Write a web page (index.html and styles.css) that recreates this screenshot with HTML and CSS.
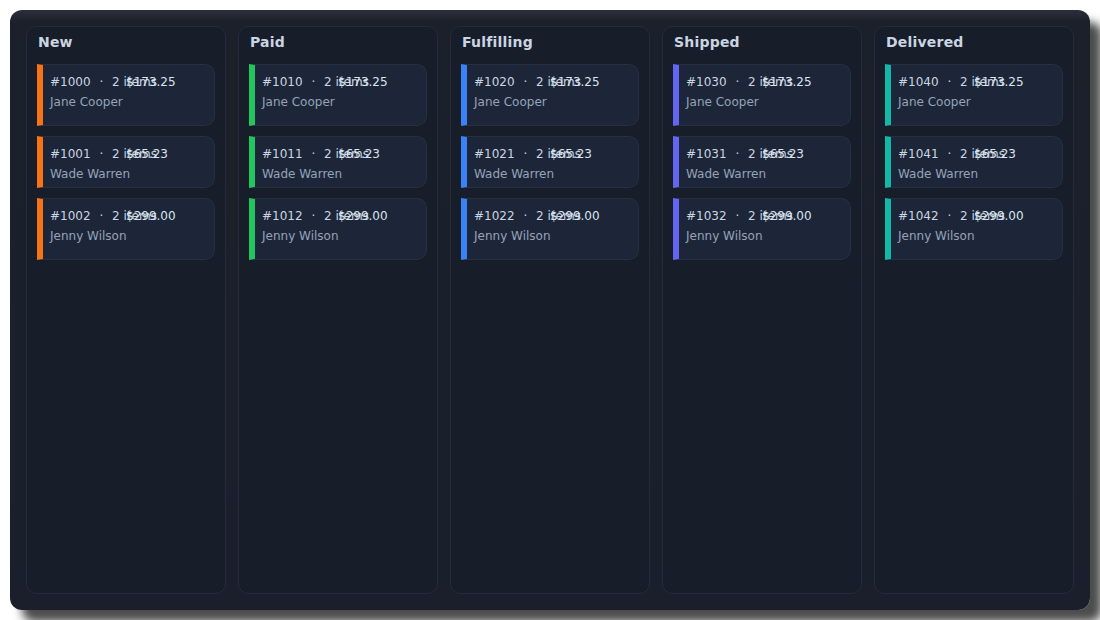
FILE: index.html
```html
<!DOCTYPE html>
<html>
<head>
<meta charset="utf-8">
<link rel="stylesheet" href="styles.css">
</head>
<body>
<div class="board">
  <section class="column">
    <h2 class="col-title">New</h2>
    <div class="card c-orange tall"><div class="top"><span class="meta">#1000 <span class="sep">·</span> 2 items</span><span class="price">$173.25</span></div><div class="name">Jane Cooper</div></div>
    <div class="card c-orange"><div class="top"><span class="meta">#1001 <span class="sep">·</span> 2 items</span><span class="price">$65.23</span></div><div class="name">Wade Warren</div></div>
    <div class="card c-orange tall"><div class="top"><span class="meta">#1002 <span class="sep">·</span> 2 items</span><span class="price">$299.00</span></div><div class="name">Jenny Wilson</div></div>
  </section>
  <section class="column">
    <h2 class="col-title">Paid</h2>
    <div class="card c-green tall"><div class="top"><span class="meta">#1010 <span class="sep">·</span> 2 items</span><span class="price">$173.25</span></div><div class="name">Jane Cooper</div></div>
    <div class="card c-green"><div class="top"><span class="meta">#1011 <span class="sep">·</span> 2 items</span><span class="price">$65.23</span></div><div class="name">Wade Warren</div></div>
    <div class="card c-green tall"><div class="top"><span class="meta">#1012 <span class="sep">·</span> 2 items</span><span class="price">$299.00</span></div><div class="name">Jenny Wilson</div></div>
  </section>
  <section class="column">
    <h2 class="col-title">Fulfilling</h2>
    <div class="card c-blue tall"><div class="top"><span class="meta">#1020 <span class="sep">·</span> 2 items</span><span class="price">$173.25</span></div><div class="name">Jane Cooper</div></div>
    <div class="card c-blue"><div class="top"><span class="meta">#1021 <span class="sep">·</span> 2 items</span><span class="price">$65.23</span></div><div class="name">Wade Warren</div></div>
    <div class="card c-blue tall"><div class="top"><span class="meta">#1022 <span class="sep">·</span> 2 items</span><span class="price">$299.00</span></div><div class="name">Jenny Wilson</div></div>
  </section>
  <section class="column">
    <h2 class="col-title">Shipped</h2>
    <div class="card c-indigo tall"><div class="top"><span class="meta">#1030 <span class="sep">·</span> 2 items</span><span class="price">$173.25</span></div><div class="name">Jane Cooper</div></div>
    <div class="card c-indigo"><div class="top"><span class="meta">#1031 <span class="sep">·</span> 2 items</span><span class="price">$65.23</span></div><div class="name">Wade Warren</div></div>
    <div class="card c-indigo tall"><div class="top"><span class="meta">#1032 <span class="sep">·</span> 2 items</span><span class="price">$299.00</span></div><div class="name">Jenny Wilson</div></div>
  </section>
  <section class="column">
    <h2 class="col-title">Delivered</h2>
    <div class="card c-teal tall"><div class="top"><span class="meta">#1040 <span class="sep">·</span> 2 items</span><span class="price">$173.25</span></div><div class="name">Jane Cooper</div></div>
    <div class="card c-teal"><div class="top"><span class="meta">#1041 <span class="sep">·</span> 2 items</span><span class="price">$65.23</span></div><div class="name">Wade Warren</div></div>
    <div class="card c-teal tall"><div class="top"><span class="meta">#1042 <span class="sep">·</span> 2 items</span><span class="price">$299.00</span></div><div class="name">Jenny Wilson</div></div>
  </section>
</div>
</body>
</html>
```
FILE: styles.css
```css
html, body {
  margin: 0;
  padding: 0;
  background: #ffffff;
  overflow: hidden;
}
body {
  padding: 10px;
  font-family: "DejaVu Sans", "Liberation Sans", sans-serif;
}
.board {
  box-sizing: border-box;
  width: 1080px;
  height: 600px;
  padding: 16px;
  display: flex;
  gap: 12px;
  background: linear-gradient(#2a2f3a 0, #232834 6px, #1b202b 11px, #1a1f2b 100%);
  border-radius: 12px;
  box-shadow: 12px 12px 10px rgba(0, 0, 0, 0.7);
}
.column {
  box-sizing: border-box;
  width: 200px;
  flex: 0 0 200px;
  padding: 7px 10px 10px;
  background: #181d2a;
  border: 1px solid #252b3a;
  border-radius: 10px;
  display: flex;
  flex-direction: column;
  gap: 10px;
}
.col-title {
  margin: 0 0 3px;
  padding-left: 1px;
  font-size: 14px;
  font-weight: bold;
  letter-spacing: 0.2px;
  color: #cbd5e1;
  line-height: 17px;
}
.card {
  box-sizing: border-box;
  background: #1d2638;
  border: 1px solid #263041;
  border-left: 6px solid #f97316;
  border-radius: 0 10px 10px 0;
  padding: 10px 7px 6px;
  font-size: 12px;
}
.card.tall {
  padding-bottom: 16px;
}
.c-orange { border-left-color: #f97316; }
.c-green { border-left-color: #22c55e; }
.c-blue { border-left-color: #3b82f6; }
.c-indigo { border-left-color: #6366f1; }
.c-teal { border-left-color: #14b8a6; }
.top {
  display: grid;
  grid-template-columns: 76px auto;
  white-space: nowrap;
  line-height: 14px;
  color: #cbd5e1;
}
.meta {
  min-width: 0;
}
.sep {
  margin: 0 5px;
}
.price {
  color: #dbe3ee;
}
.name {
  margin-top: 6px;
  line-height: 14px;
  color: #94a3b8;
}
```
